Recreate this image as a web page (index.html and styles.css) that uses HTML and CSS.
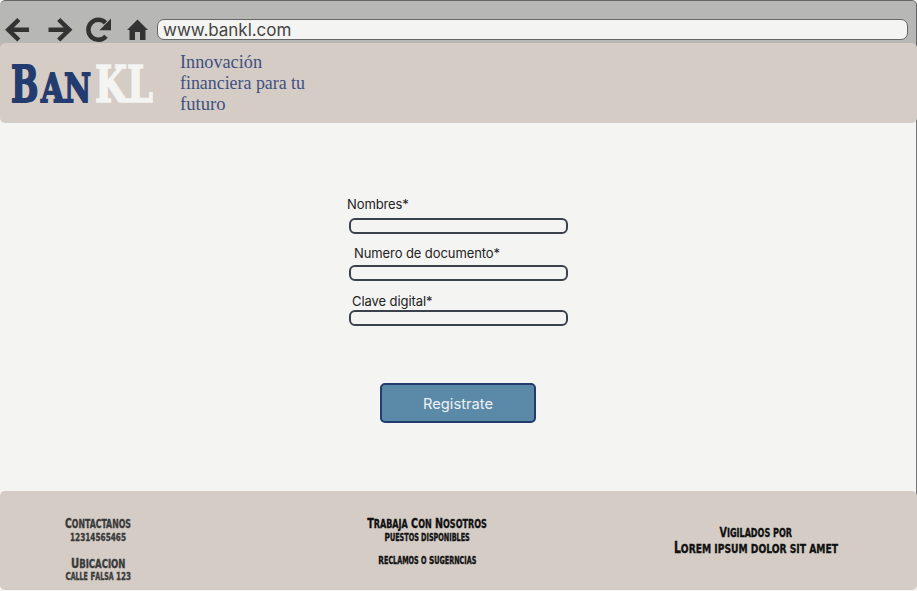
FILE: index.html
```
<!DOCTYPE html>
<html lang="es">
<head>
<meta charset="utf-8">
<title>BanKL</title>
<link rel="stylesheet" href="styles.css">
</head>
<body>
<div class="window">
  <div class="toolbar">
    <svg class="nav" width="157" height="43" viewBox="0 0 157 43">
      <g class="arrow">
        <path d="M29 29.800H9M18.800 19.500L8.300 29.800L18.800 40"/>
        <path d="M48.500 29.800H69M58.700 19.500L69.200 29.800L58.700 40"/>
        <path d="M106 36.300A10 10 0 1 1 105.500 22.800"/>
      </g>
      <path class="solid" d="M111 18.500V30.200H99.500Z"/>
      <path class="solid" d="M137.500 19.500L148 30H145.500V40H140V32H135V40H129.500V30H127Z"/>
    </svg>
    <div class="address">www.bankl.com</div>
  </div>
  <header class="header">
    <svg class="logo" width="160" height="80" viewBox="0 0 160 80">
      <text class="navy big" x="11" y="58.800" textLength="27.500" lengthAdjust="spacingAndGlyphs">B</text>
      <text class="navy small" x="41" y="58.800" textLength="50" lengthAdjust="spacingAndGlyphs">AN</text>
      <text class="pale big" x="95" y="58.800" textLength="58" lengthAdjust="spacingAndGlyphs">KL</text>
    </svg>
    <svg class="tagline" width="140" height="80" viewBox="180 0 140 80">
      <text x="180" y="24.500" textLength="82" lengthAdjust="spacingAndGlyphs">Innovación</text>
      <text x="180" y="45.800" textLength="125" lengthAdjust="spacingAndGlyphs">financiera para tu</text>
      <text x="180" y="66.800" textLength="45.500" lengthAdjust="spacingAndGlyphs">futuro</text>
    </svg>
  </header>
  <main class="main">
    <form class="form">
      <label class="label name" for="n">Nombres*</label>
      <input class="field" id="n">
      <label class="label doc" for="d">Numero de documento*</label>
      <input class="field" id="d">
      <label class="label key" for="k">Clave digital*</label>
      <input class="field" id="k">
      <button class="submit" type="button">Registrate</button>
    </form>
  </main>
  <footer class="footer">
    <svg width="917" height="99" viewBox="0 491 917 99">
      <g class="gray">
        <text class="l" x="65" y="528" textLength="66" lengthAdjust="spacingAndGlyphs">C<tspan class="lc">ontactanos</tspan></text>
        <text class="m" x="70" y="540.500" textLength="56" lengthAdjust="spacingAndGlyphs">12314565465</text>
        <text class="l" x="71" y="567.500" textLength="54.500" lengthAdjust="spacingAndGlyphs">U<tspan class="lc">bicacion</tspan></text>
        <text class="m" x="65.500" y="580.300" textLength="65.500" lengthAdjust="spacingAndGlyphs">C<tspan class="mc">alle</tspan> F<tspan class="mc">alsa</tspan> 123</text>
      </g>
      <text class="l" x="367.300" y="528" textLength="119.500" lengthAdjust="spacingAndGlyphs">T<tspan class="lc">rabaja</tspan> C<tspan class="lc">on</tspan> N<tspan class="lc">osotros</tspan></text>
      <text class="m" x="384.500" y="540.500" textLength="85.300" lengthAdjust="spacingAndGlyphs">P<tspan class="mc">uestos disponibles</tspan></text>
      <text class="m" x="378.300" y="564.300" textLength="98" lengthAdjust="spacingAndGlyphs">R<tspan class="mc">eclamos o</tspan> S<tspan class="mc">ugerncias</tspan></text>
      <text class="l" x="719.500" y="537" textLength="72.500" lengthAdjust="spacingAndGlyphs">V<tspan class="lc">igilados por</tspan></text>
      <text class="xl" x="674" y="553" textLength="164" lengthAdjust="spacingAndGlyphs">L<tspan class="xlc">orem ipsum dolor sit amet</tspan></text>
    </svg>
  </footer>
</div>
</body>
</html>
```
FILE: styles.css
```
* { box-sizing: border-box; }
body { margin: 0; background: #f4f4f2; font-family: Inter, sans-serif; }
svg { display: block; flex: none; }
.window { display: flex; flex-direction: column; height: 591px; overflow: hidden; border-radius: 5px 5px 0 0;
  background: linear-gradient(#777, #777) right 0 top 0 / 1px 500px no-repeat, #f4f4f2; }
.toolbar { display: flex; height: 47px; background: #b7b7b5; border: solid #666; border-width: 1px 1px 0 0; border-radius: 5px 5px 0 0; }
.nav { margin-top: -1px; }
.arrow { fill: none; stroke: #333; stroke-width: 4.5; }
.solid { fill: #333; }
.address { width: 751px; height: 21px; margin-top: 18px; padding-left: 5px; border: 1px solid #666; border-radius: 7px;
  background: #f4f4f2; color: #444; font-size: 17px; line-height: 21px; letter-spacing: -.03px; }
.header { display: flex; height: 80px; margin-top: -4px; background: #d4ccc5; border-radius: 5px; }
.logo { margin-right: 20px; font-family: "DejaVu Serif", serif; font-weight: bold; }
.big { font-size: 51px; }
.small { font-size: 40px; }
.navy { fill: #233b6e; stroke: #233b6e; stroke-width: 1.8; }
.pale { fill: #f4f4f2; stroke: #f4f4f2; stroke-width: 1.6; }
.tagline { font-family: "Liberation Serif", serif; font-size: 18.5px; fill: #405080; }
.main { height: 368px; padding: 73px 0 0 347px; }
.form { display: flex; flex-direction: column; width: 230px; }
.label { color: #222; font-size: 13px; line-height: 16px; white-space: nowrap; align-self: flex-start; }
.name { margin-bottom: 6px; letter-spacing: -.1px; }
.doc { margin: 11px 0 4px 7px; letter-spacing: -.09px; }
.key { margin: 12px 0 1px 5px; letter-spacing: -.08px; }
.field { width: 219px; height: 16px; margin: 0 0 0 2px; padding: 0 5px; border: 2px solid #3c424c; border-radius: 6px; background: #f4f4f2; }
.submit { width: 156px; height: 40px; margin: 57px 0 0 33px; padding: 2px 0 0; border: 2px solid #233b6e; border-radius: 5px;
  background: #5b8aa8; color: #eef1f3; font: 14.7px Inter, sans-serif; }
.footer { height: 99px; background: #d4ccc5; border-radius: 5px; }
.footer text { font-family: "DejaVu Sans Condensed", "DejaVu Sans", sans-serif; font-weight: bold; fill: #111; stroke: #111; stroke-width: .35; }
.footer .gray text { fill: #3a3a3a; stroke: #3a3a3a; }
.footer tspan { text-transform: uppercase; }
.l { font-size: 14px; }
.lc { font-size: 11.8px; }
.m { font-size: 11px; }
.mc { font-size: 9.6px; }
.xl { font-size: 15px; }
.xlc { font-size: 12.8px; }
```
